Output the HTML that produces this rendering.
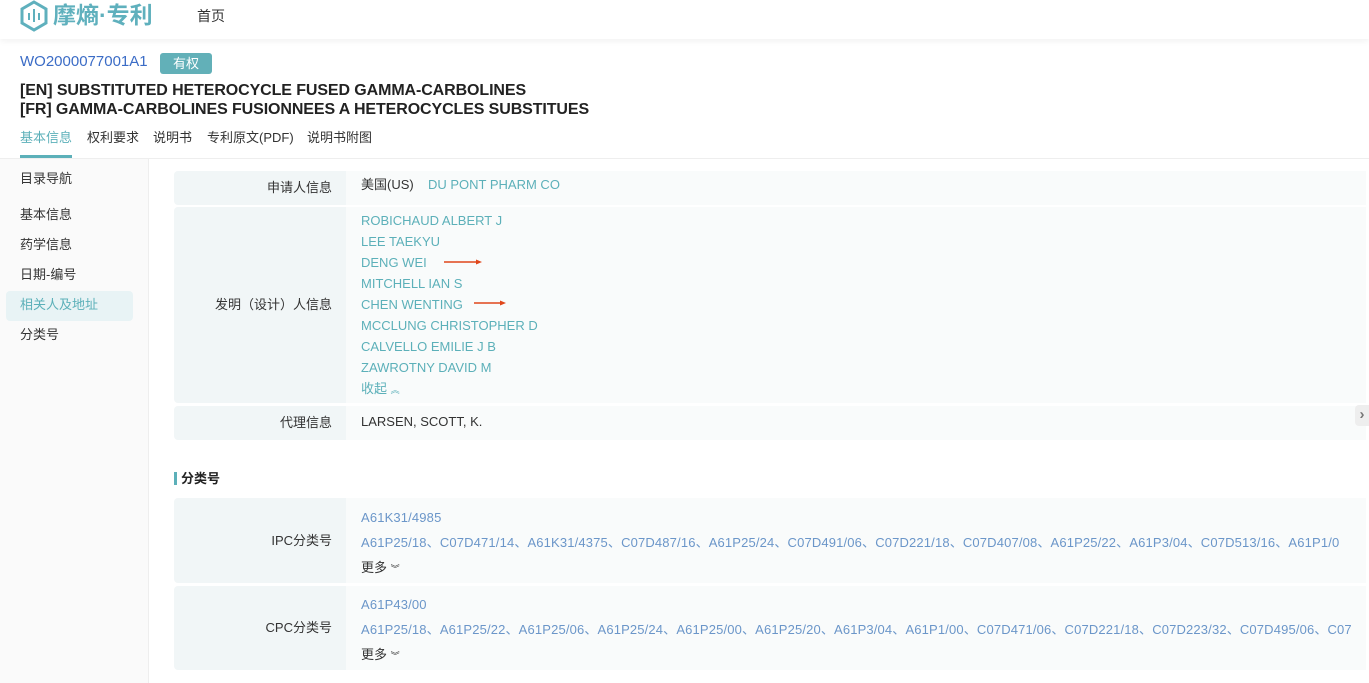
<!DOCTYPE html><html><head><meta charset="utf-8"><style>
*{margin:0;padding:0;box-sizing:border-box}
body{width:1369px;height:683px;overflow:hidden;background:#fff;font-family:"Liberation Sans","Noto Sans CJK SC",sans-serif;font-size:13px;color:#333;position:relative}
.a{position:absolute;white-space:nowrap;line-height:16px}
.t{color:#5cb0b9}
.b{color:#6b96c9;letter-spacing:0.15px}
.lab{position:absolute;left:174px;width:172px;background:#f1f6f7;border-radius:4px 0 0 4px;text-align:right;padding-right:14px}
.val{position:absolute;left:346px;width:1020px;background:#f9fbfb}
</style></head><body>
<div class="a" style="left:0;top:0;width:1369px;height:39px;background:#fff;box-shadow:0 2px 6px rgba(0,0,0,.06)"></div>
<svg class="a" style="left:19px;top:0" width="30" height="32" viewBox="0 0 30 32"><path d="M15 2 L27 9 V23 L15 30 L3 23 V9 Z" fill="none" stroke="#5fb0bd" stroke-width="3"/><g stroke="#5fb0bd" stroke-width="2"><line x1="10" y1="13" x2="10" y2="20"/><line x1="15" y1="9" x2="15" y2="22"/><line x1="20" y1="13" x2="20" y2="20"/></g></svg>
<div class="a" style="left:53px;top:0;font-size:23px;color:#5fb0bd;line-height:30px;font-weight:bold">摩熵·专利</div>
<div class="a" style="left:197px;top:8px;font-size:14px;color:#333">首页</div>
<div class="a" style="left:20px;top:54px;font-size:15px;color:#3b6cc6">WO2000077001A1</div>
<div class="a" style="left:160px;top:53px;width:52px;height:21px;background:#62b0b8;border-radius:3px;color:#fff;text-align:center;line-height:21px;font-size:13px">有权</div>
<div class="a" style="left:20px;top:81px;font-size:16px;font-weight:bold;color:#222;line-height:19px;letter-spacing:-0.1px">[EN] SUBSTITUTED HETEROCYCLE FUSED GAMMA-CARBOLINES<br>[FR] GAMMA-CARBOLINES FUSIONNEES A HETEROCYCLES SUBSTITUES</div>
<div class="a" style="left:20px;top:130px;color:#5cb0b9">基本信息</div>
<div class="a" style="left:87px;top:130px">权利要求</div>
<div class="a" style="left:153px;top:130px">说明书</div>
<div class="a" style="left:207px;top:130px">专利原文(PDF)</div>
<div class="a" style="left:307px;top:130px">说明书附图</div>
<div class="a" style="left:20px;top:155px;width:52px;height:3px;background:#5cb0b9"></div>
<div class="a" style="left:0;top:158px;width:1369px;height:1px;background:#eee"></div>
<div class="a" style="left:0;top:159px;width:149px;height:524px;background:#fafafa;border-right:1px solid #eee"></div>
<div class="a" style="left:20px;top:171px">目录导航</div>
<div class="a" style="left:20px;top:207px">基本信息</div>
<div class="a" style="left:20px;top:237px">药学信息</div>
<div class="a" style="left:20px;top:267px">日期-编号</div>
<div class="a" style="left:6px;top:291px;width:127px;height:30px;background:#e8f3f5;border-radius:4px"></div>
<div class="a t" style="left:20px;top:297px">相关人及地址</div>
<div class="a" style="left:20px;top:327px">分类号</div>

<div class="lab" style="top:171px;height:34px;line-height:34px">申请人信息</div>
<div class="val" style="top:171px;height:34px"></div>
<div class="a" style="left:361px;top:177px">美国(US)</div><div class="a t" style="left:428px;top:177px">DU PONT PHARM CO</div>
<div class="lab" style="top:207px;height:196px;line-height:196px">发明（设计）人信息</div>
<div class="val" style="top:207px;height:196px"></div>
<div class="a t" style="left:361px;top:213px">ROBICHAUD ALBERT J</div>
<div class="a t" style="left:361px;top:234px">LEE TAEKYU</div>
<div class="a t" style="left:361px;top:255px">DENG WEI</div>
<div class="a t" style="left:361px;top:276px">MITCHELL IAN S</div>
<div class="a t" style="left:361px;top:297px">CHEN WENTING</div>
<div class="a t" style="left:361px;top:318px">MCCLUNG CHRISTOPHER D</div>
<div class="a t" style="left:361px;top:339px">CALVELLO EMILIE J B</div>
<div class="a t" style="left:361px;top:360px">ZAWROTNY DAVID M</div>
<div class="a t" style="left:361px;top:381px">收起 <span style="font-size:9px">︽</span></div>
<svg class="a" style="left:444px;top:259px" width="40" height="6"><line x1="0" y1="3" x2="34" y2="3" stroke="#e0461a" stroke-width="1.5"/><path d="M32 0.5 L38 3 L32 5.5Z" fill="#e0461a"/></svg>
<svg class="a" style="left:474px;top:300px" width="34" height="6"><line x1="0" y1="3" x2="28" y2="3" stroke="#e0461a" stroke-width="1.5"/><path d="M26 0.5 L32 3 L26 5.5Z" fill="#e0461a"/></svg>
<div class="lab" style="top:406px;height:34px;line-height:34px">代理信息</div>
<div class="val" style="top:406px;height:34px"></div>
<div class="a" style="left:361px;top:414px">LARSEN, SCOTT, K.</div>
<div class="a" style="left:1355px;top:405px;width:14px;height:21px;background:#eee;border-radius:4px 0 0 4px;color:#777;font-size:15px;line-height:20px;text-align:center;font-weight:bold">›</div>

<div class="a" style="left:174px;top:472px;width:3px;height:13px;background:#5cb0b9"></div>
<div class="a" style="left:181px;top:471px;font-weight:bold;color:#222">分类号</div>
<div class="lab" style="top:498px;height:85px;line-height:85px">IPC分类号</div>
<div class="val" style="top:498px;height:85px"></div>
<div class="a b" style="left:361px;top:510px">A61K31/4985</div>
<div class="a b" style="left:361px;top:535px">A61P25/18、C07D471/14、A61K31/4375、C07D487/16、A61P25/24、C07D491/06、C07D221/18、C07D407/08、A61P25/22、A61P3/04、C07D513/16、A61P1/0</div>
<div class="a" style="left:361px;top:560px">更多 <span style="font-size:9px">︾</span></div>
<div class="lab" style="top:586px;height:84px;line-height:84px">CPC分类号</div>
<div class="val" style="top:586px;height:84px"></div>
<div class="a b" style="left:361px;top:597px">A61P43/00</div>
<div class="a b" style="left:361px;top:622px">A61P25/18、A61P25/22、A61P25/06、A61P25/24、A61P25/00、A61P25/20、A61P3/04、A61P1/00、C07D471/06、C07D221/18、C07D223/32、C07D495/06、C07</div>
<div class="a" style="left:361px;top:647px">更多 <span style="font-size:9px">︾</span></div>
</body></html>
